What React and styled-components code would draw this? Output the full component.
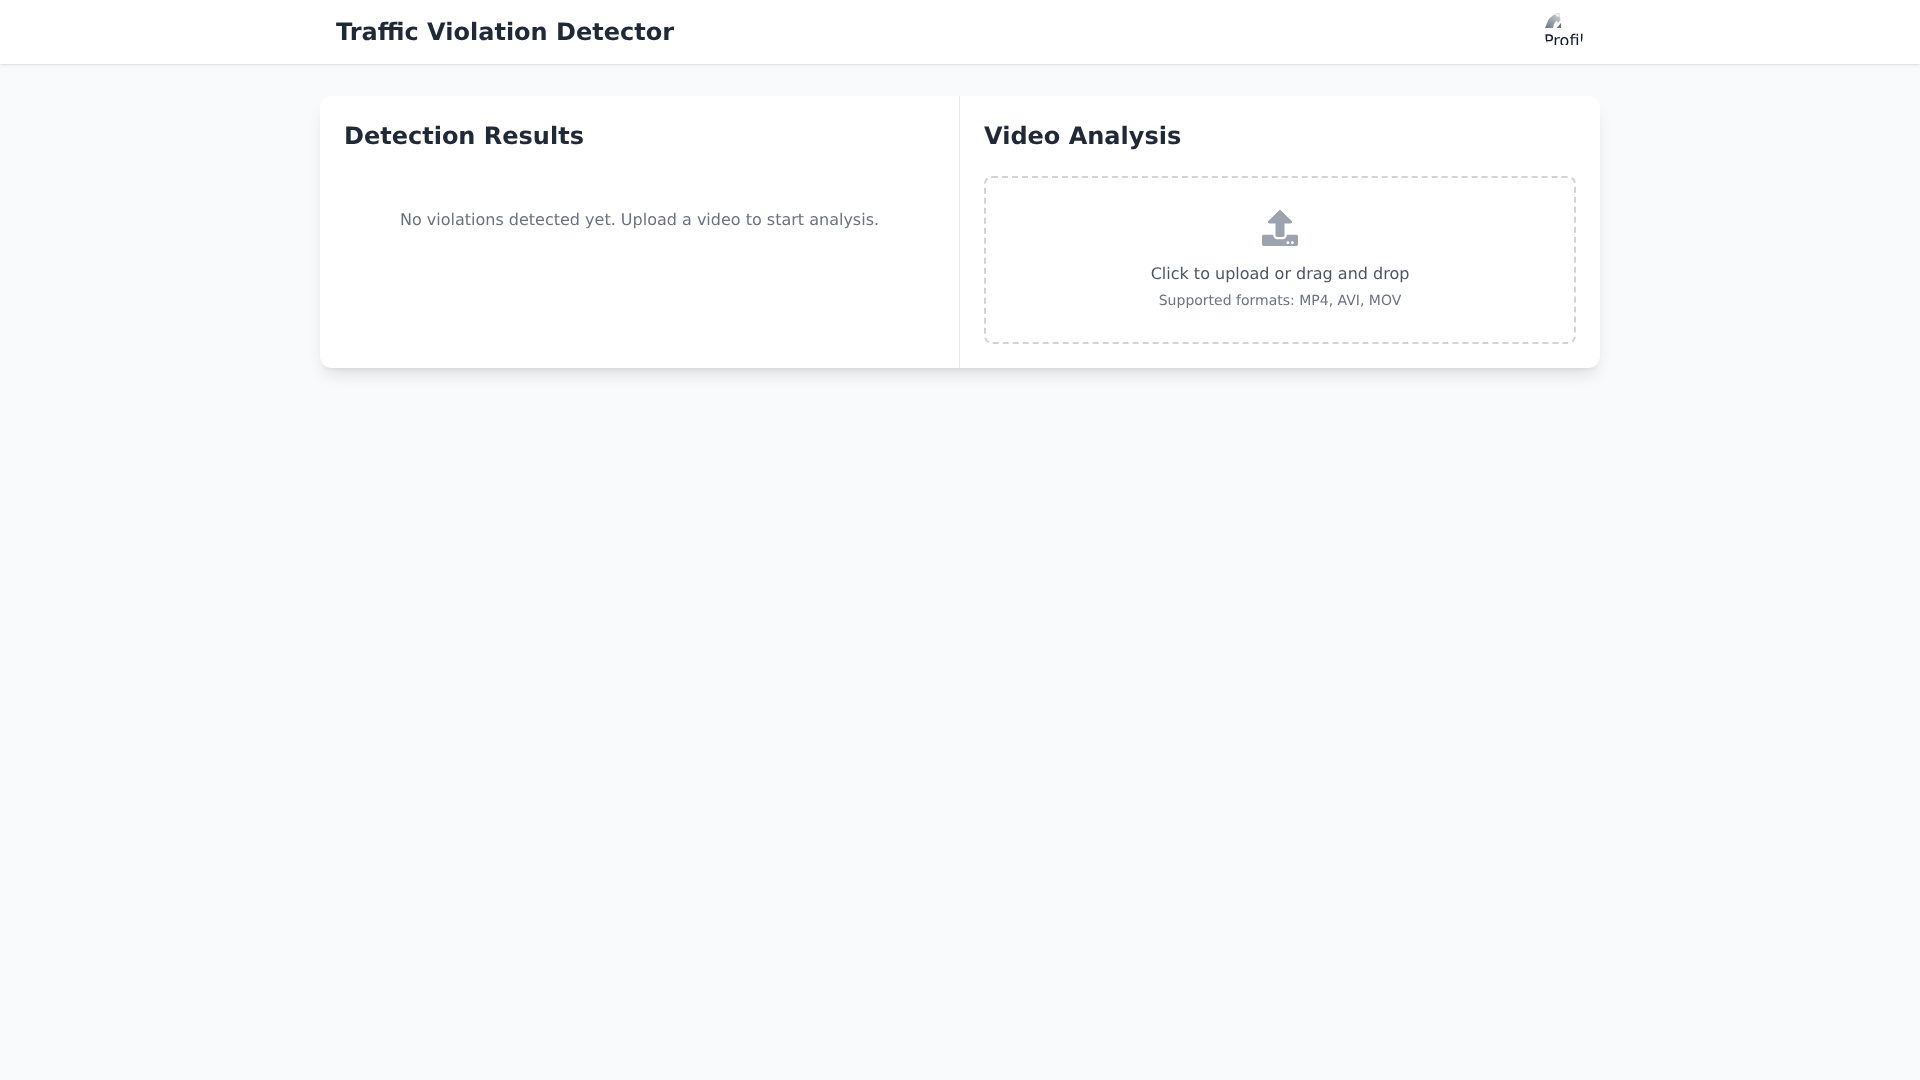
import React from 'react'
import styled, { createGlobalStyle } from 'styled-components'
import { FaUpload } from 'react-icons/fa'

const GlobalStyle = createGlobalStyle`
  * {
    box-sizing: border-box;
  }

  body {
    margin: 0;
    min-height: 100vh;
    background-color: #f9fafb;
    font-family: "DejaVu Sans", sans-serif;
    font-size: 16px;
    line-height: 24px;
    text-rendering: geometricPrecision;
  }

  #root {
    will-change: transform;
  }
`

const Nav = styled.nav`
  height: 64px;
  background-color: white;
  box-shadow: 0 1px 3px 0 rgba(0,0,0,0.1), 0 1px 2px -1px rgba(0,0,0,0.1);
`

const NavInner = styled.div`
  max-width: 1280px;
  height: 100%;
  margin: 0 auto;
  padding: 0 16px;
  display: flex;
  align-items: center;
  justify-content: space-between;
`

const Title = styled.h1`
  margin: 0;
  font-size: 24px;
  line-height: 32px;
  font-weight: 700;
  color: #1f2937;
`

const Avatar = styled.div`
  width: 40px;
  height: 40px;
  border-radius: 50%;
  overflow: hidden;
  color: #111827;
`

const BrokenIcon = styled.svg`
  display: block;
  width: 18px;
  height: 17px;
`

const AltText = styled.span`
  display: block;
  height: 16px;
  line-height: 24px;
  overflow: hidden;
`

const Main = styled.main`
  max-width: 1280px;
  margin: 0 auto;
  padding: 32px 0;
`

const Card = styled.div`
  display: grid;
  grid-template-columns: 1fr 1fr;
  background-color: white;
  border-radius: 12px;
  box-shadow: 0 10px 15px -3px rgba(0,0,0,0.1), 0 4px 6px -4px rgba(0,0,0,0.1);
  overflow: hidden;
`

const Panel = styled.section`
  padding: 24px;
  border-right: ${props => props.$divider ? '1px solid #e5e7eb' : '0'};
`

const Heading = styled.h2`
  margin: 0 0 24px 0;
  font-size: 24px;
  line-height: 32px;
  font-weight: 700;
  color: #1f2937;
`

const EmptyText = styled.p`
  margin: 0;
  padding: 32px 0;
  text-align: center;
  color: #6b7280;
`

const DropZone = styled.div`
  padding: 32px 32px 31px 32px;
  border: 2px dashed #d1d5db;
  border-radius: 8px;
  text-align: center;
  cursor: pointer;
`

const IconLine = styled.div`
  height: 40px;
  margin-bottom: 12px;
  display: flex;
  justify-content: center;
  color: #9ca3af;
  font-size: 36px;
`

const UploadText = styled.p`
  margin: 0;
  color: #4b5563;
`

const Formats = styled.p`
  margin: 5px 0 0 0;
  font-size: 14px;
  line-height: 20px;
  color: #6b7280;
`

const App = () => {
  return (
    <>
      <GlobalStyle />
      <Nav>
        <NavInner>
          <Title>Traffic Violation Detector</Title>
          <Avatar>
            <BrokenIcon viewBox="0 0 18 17">
              <defs>
                <linearGradient id="broken" x1="0" y1="1" x2="1" y2="0">
                  <stop offset="0" stopColor="#6b7280" />
                  <stop offset="0.55" stopColor="#a8adb5" />
                  <stop offset="1" stopColor="#d1d5db" />
                </linearGradient>
              </defs>
              <path d="M1 16 L5 6.5 L9.5 3 L11 1 L15.5 1 L16.5 8 L14 11 L12.5 8.5 L10 12 L9 16 Z" fill="url(#broken)" />
              <path d="M11 1.8 L15 1.6 L15.6 5 L12.5 4.5 Z" fill="#eef0f2" />
              <path d="M17 11 L17 16 L12.7 16 Z" fill="#6b7280" />
            </BrokenIcon>
            <AltText>Profile</AltText>
          </Avatar>
        </NavInner>
      </Nav>
      <Main>
        <Card>
          <Panel $divider>
            <Heading>Detection Results</Heading>
            <EmptyText>No violations detected yet. Upload a video to start analysis.</EmptyText>
          </Panel>
          <Panel>
            <Heading>Video Analysis</Heading>
            <DropZone>
              <IconLine><FaUpload /></IconLine>
              <UploadText>Click to upload or drag and drop</UploadText>
              <Formats>Supported formats: MP4, AVI, MOV</Formats>
            </DropZone>
          </Panel>
        </Card>
      </Main>
    </>
  )
}

export default App
